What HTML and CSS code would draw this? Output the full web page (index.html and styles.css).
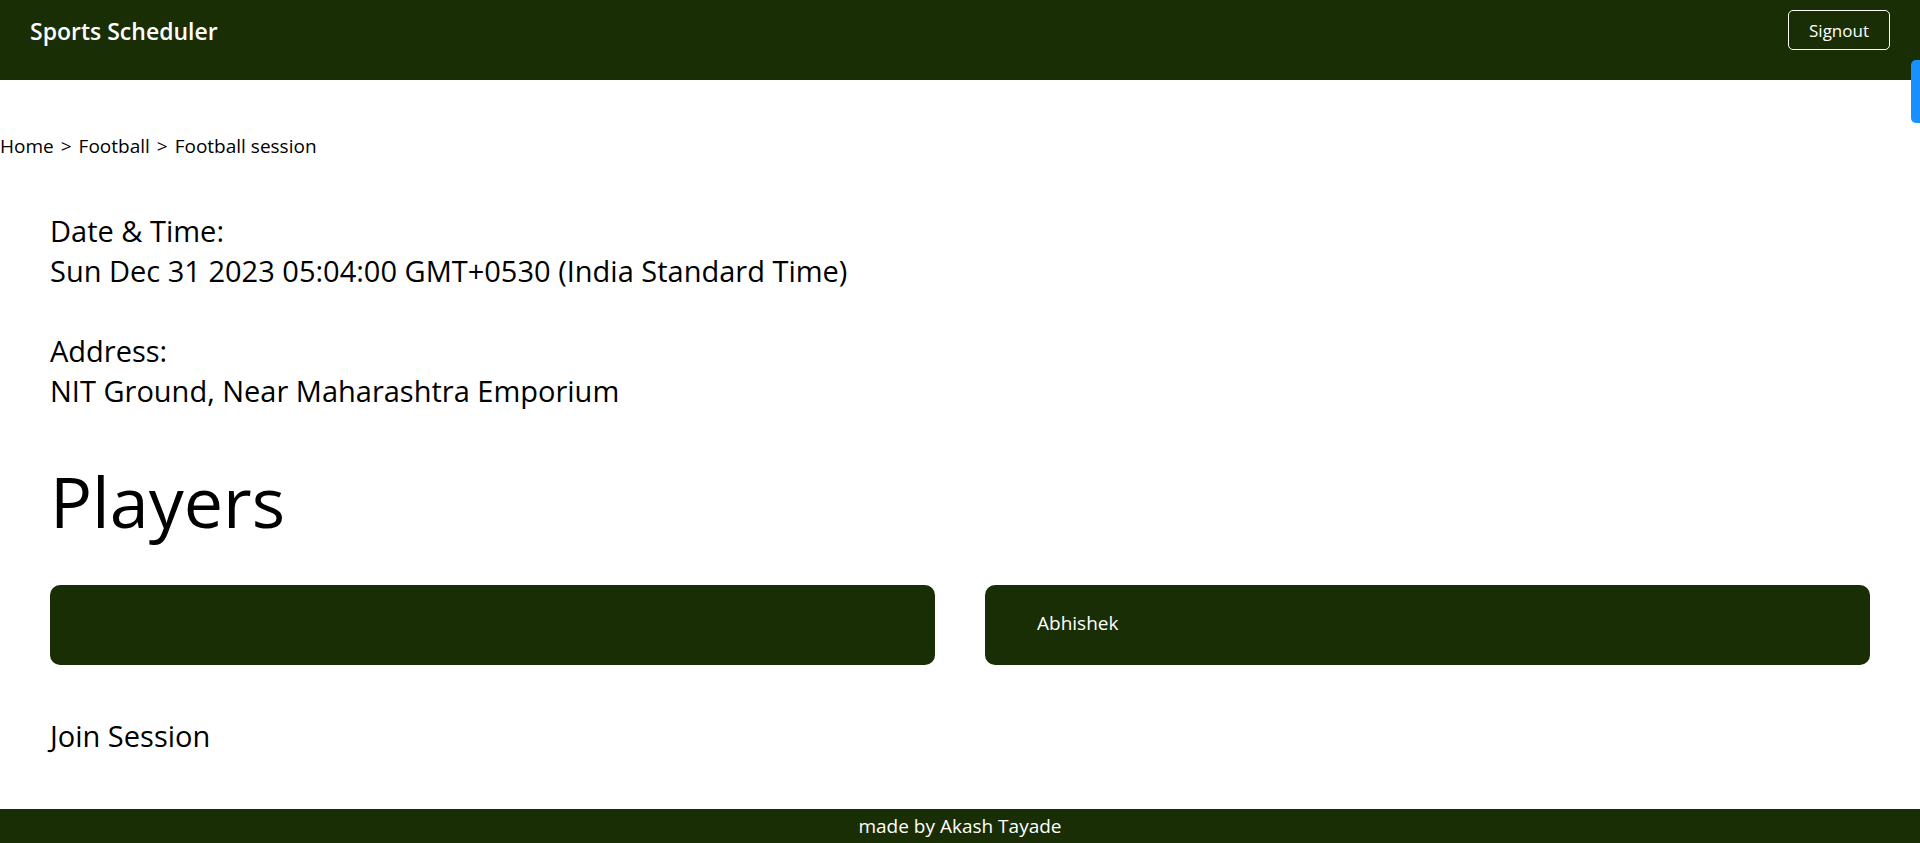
FILE: index.html
```
<!DOCTYPE html>
<html lang="en">
<head>
<meta charset="utf-8">
<meta name="viewport" content="width=device-width, initial-scale=1">
<title>Sports Scheduler</title>
<link rel="stylesheet" href="styles.css">
</head>
<body class="page">
<header class="topbar">
<a class="brand" href="#">Sports Scheduler</a>
<button class="signout" type="button">Signout</button>
</header>
<button class="side-tab" type="button" aria-label="Open side panel"></button>
<nav class="breadcrumb" aria-label="Breadcrumb">
<a href="#">Home</a><span>&gt;</span><a href="#">Football</a><span>&gt;</span><a href="#">Football session</a>
</nav>
<main class="session">
<div class="details">
<p>Date &amp; Time:<br>Sun Dec 31 2023 05:04:00 GMT+0530 (India Standard Time)</p>
<p>Address:<br>NIT Ground, Near Maharashtra Emporium</p>
</div>
<h1 class="heading">Players</h1>
<ul class="players">
<li class="player"></li>
<li class="player">Abhishek</li>
</ul>
<button class="join" type="button">Join Session</button>
</main>
<footer class="footer">made by Akash Tayade</footer>
</body>
</html>
```
FILE: styles.css
```
* {
  box-sizing: border-box;
}

.page {
  display: flex;
  flex-direction: column;
  min-height: 100vh;
  margin: 0;
  background: #fff;
  color: #000;
  font-family: "Segoe UI", "Open Sans", "Noto Sans", sans-serif;
  font-size: 19px;
  line-height: 28px;
}

a {
  color: inherit;
  text-decoration: none;
}

button {
  font-family: inherit;
  cursor: pointer;
}

.topbar {
  display: flex;
  justify-content: space-between;
  align-items: flex-start;
  height: 80px;
  padding: 10px 30px;
  background: #1a2e05;
  color: #fff;
}

.brand {
  font-size: 23px;
  font-weight: 600;
  line-height: 42px;
}

.signout {
  height: 40px;
  padding: 0 20px;
  border: 1px solid #fff;
  border-radius: 5px;
  background: transparent;
  color: #fff;
  font-size: 17px;
}

.side-tab {
  position: absolute;
  top: 60px;
  right: 0;
  width: 9px;
  height: 63px;
  padding: 0;
  border: 0;
  border-radius: 5px 0 0 5px;
  background: #1890ff;
}

.breadcrumb {
  display: flex;
  gap: 7px;
  padding: 52px 0 51px;
}

.session {
  flex: 1;
  padding: 0 50px 40px;
}

.details {
  display: grid;
  gap: 40px;
  font-size: 29px;
  line-height: 40px;
}

.details p {
  margin: 0;
}

.heading {
  margin: 44px 0 38px;
  font-size: 70px;
  font-weight: 400;
  line-height: 92px;
}

.players {
  display: grid;
  grid-template-columns: 1fr 1fr;
  gap: 50px;
  margin: 0 0 51px;
  padding: 0;
  list-style: none;
}

.player {
  min-height: 80px;
  padding: 24px 52px;
  border-radius: 10px;
  background: #1a2e05;
  color: #fff;
}

.join {
  padding: 0;
  border: 0;
  background: none;
  color: #000;
  font-size: 29px;
  line-height: 40px;
}

.footer {
  padding: 3px 0;
  background: #1a2e05;
  color: #fff;
  text-align: center;
}
```
